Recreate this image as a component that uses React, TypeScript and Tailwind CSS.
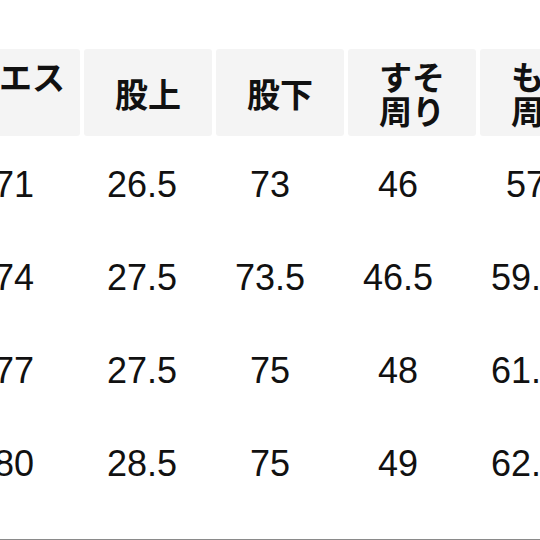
import React from "react";

const headers: { lines: string[]; left?: boolean }[] = [
  { lines: ["ウエスト"], left: true },
  { lines: ["股上"] },
  { lines: ["股下"] },
  { lines: ["すそ", "周り"] },
  { lines: ["もも", "周り"] },
];

const rows = [
  ["71", "26.5", "73", "46", "57"],
  ["74", "27.5", "73.5", "46.5", "59.5"],
  ["77", "27.5", "75", "48", "61.5"],
  ["80", "28.5", "75", "49", "62.5"],
];

export default function App() {
  return (
    <div className="w-[540px] h-[540px] bg-white overflow-hidden flex flex-col relative">
      <div className="flex gap-[4px] ml-[-48px] mt-[49px] mb-[2px] shrink-0">
        {headers.map((h, i) => (
          <div
            key={i}
            className={
              h.left
                ? "w-[128px] h-[87px] shrink-0 bg-[#f4f4f4] rounded-[3px] flex flex-col justify-center px-[14px] text-left text-[33px] leading-[34px] font-bold text-[#111]"
                : "w-[128px] h-[87px] shrink-0 bg-[#f4f4f4] rounded-[3px] flex flex-col items-center justify-center text-center text-[33px] leading-[34px] font-bold text-[#111]"
            }
            style={{ fontFamily: '"Noto Sans CJK JP", sans-serif' }}
          >
            {h.lines.map((l, j) => (
              <div key={j}>{l}</div>
            ))}
          </div>
        ))}
      </div>
      {rows.map((r, i) => (
        <div key={i} className="flex ml-[-50px] h-[93px] shrink-0">
          {r.map((v, j) => (
            <div
              key={j}
              className="w-[128px] shrink-0 flex items-center justify-center text-[36px] text-[#111] whitespace-nowrap"
              style={{ fontFamily: '"Liberation Sans", Arial, sans-serif' }}
            >
              {v}
            </div>
          ))}
        </div>
      ))}
      <div className="mt-auto h-[1px] bg-[#8a8a8a] shrink-0" />
    </div>
  );
}
